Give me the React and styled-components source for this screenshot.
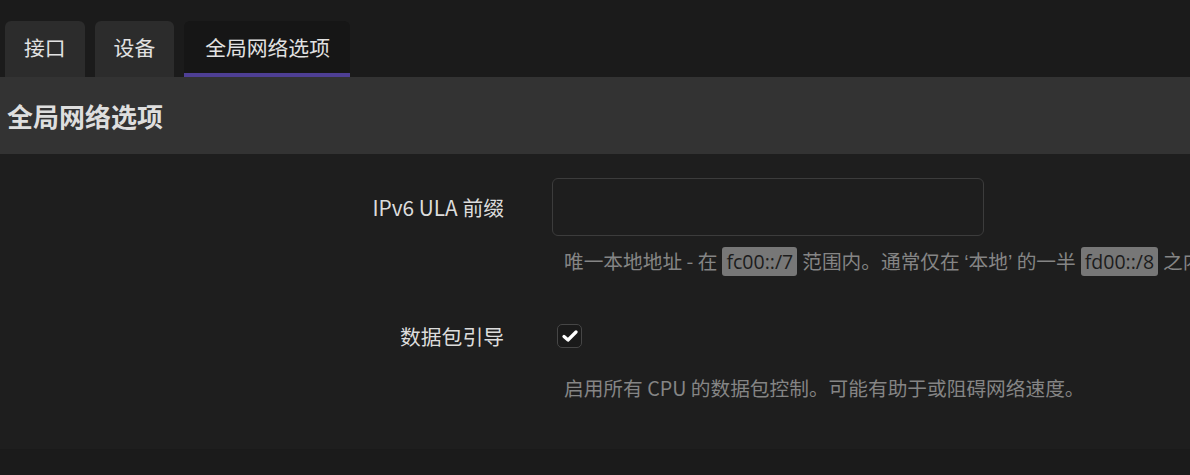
import React from "react";
import styled, { createGlobalStyle } from "styled-components";

const GlobalStyle = createGlobalStyle`
  html, body {
    margin: 0;
    padding: 0;
    background: #1b1b1b;
  }
  body {
    font-family: "Noto Sans CJK SC", "Noto Sans", sans-serif;
    color: #dcdcdc;
  }
`;

const Page = styled.div`
  width: 100%;
  height: 475px;
  overflow: hidden;
  background: #1b1b1b;
`;

const TabBar = styled.ul`
  display: flex;
  gap: 10px;
  list-style: none;
  margin: 0;
  padding: 21px 0 0 5px;
`;

const Tab = styled.li`
  box-sizing: border-box;
  height: 56px;
  padding: 0 19px;
  display: flex;
  align-items: center;
  font-size: 20.8px;
  color: #e2e2e2;
  border-radius: 6px 6px 0 0;
  background: ${(p) => (p.$active ? "#161616" : "#2c2c2c")};
  border-bottom: 4px solid ${(p) => (p.$active ? "#4e3f94" : "transparent")};
  ${(p) => p.$active && "padding: 0 20px 0 21px;"}
`;

const SectionHead = styled.h2`
  margin: 0;
  height: 77px;
  display: flex;
  align-items: center;
  padding-left: 7px;
  background: #333333;
  font-size: 26px;
  font-weight: 700;
  color: #dedede;
`;

const Body = styled.div`
  background: #1e1e1e;
  padding: 24px 0 48px;
  border-bottom: 1px solid #1a1a1a;
  display: flex;
  flex-direction: column;
  gap: 32px;
`;

const Row = styled.div`
  display: grid;
  grid-template-columns: 504px 1fr;
  column-gap: 48px;
  row-gap: ${(p) => p.$descGap || "12px"};
  align-items: center;
`;

const Label = styled.label`
  text-align: right;
  font-size: 20.8px;
  color: #dcdcdc;
`;

const Field = styled.div`
  display: flex;
  align-items: center;
  height: 58px;
`;

const TextInput = styled.input`
  box-sizing: border-box;
  width: 432px;
  height: 58px;
  background: #1e1e1e;
  border: 1px solid #3c3c3c;
  border-radius: 6px;
  outline: none;
  color: #ddd;
  font-size: 18px;
  padding: 0 12px;
`;

const Check = styled.span`
  box-sizing: border-box;
  width: 25px;
  height: 24px;
  margin-left: 5px;
  border: 1px solid #464646;
  border-radius: 5px;
  background: #1a1a1a;
  display: flex;
  align-items: center;
  justify-content: center;
`;

const Desc = styled.div`
  grid-column: 2;
  padding-left: 12px;
  font-size: 19.7px;
  color: #858585;
  white-space: nowrap;
  line-height: 26px;
`;

const Quote = styled.span`
  font-family: "Liberation Sans", sans-serif;
`;

const Code = styled.code`
  font-family: "Open Sans", "Noto Sans", sans-serif;
  font-size: 19.5px;
  background: #777777;
  color: #1c1c1c;
  border-radius: 3px;
  padding: 1px 4px;
  margin: 0 5px;
`;

export default function App() {
  return (
    <Page>
      <GlobalStyle />
      <TabBar>
        <Tab>接口</Tab>
        <Tab>设备</Tab>
        <Tab $active>全局网络选项</Tab>
      </TabBar>
      <SectionHead>全局网络选项</SectionHead>
      <Body>
        <Row>
          <Label>IPv6 ULA 前缀</Label>
          <Field>
            <TextInput type="text" />
          </Field>
          <Desc>
            唯一本地地址 - 在<Code>fc00::/7</Code>范围内。通常仅在 <Quote>‘</Quote>本地<Quote>’</Quote> 的一半
            <Code>fd00::/8</Code>之内。
          </Desc>
        </Row>
        <Row $descGap="10px">
          <Label>数据包引导</Label>
          <Field>
            <Check>
              <svg width="16" height="14" viewBox="0 0 16 14">
                <path
                  d="M2 7.5 L6 11 L14 3"
                  fill="none"
                  stroke="#ffffff"
                  strokeWidth="3.2"
                  strokeLinecap="round"
                  strokeLinejoin="round"
                />
              </svg>
            </Check>
          </Field>
          <Desc>启用所有 CPU 的数据包控制。可能有助于或阻碍网络速度。</Desc>
        </Row>
      </Body>
    </Page>
  );
}
